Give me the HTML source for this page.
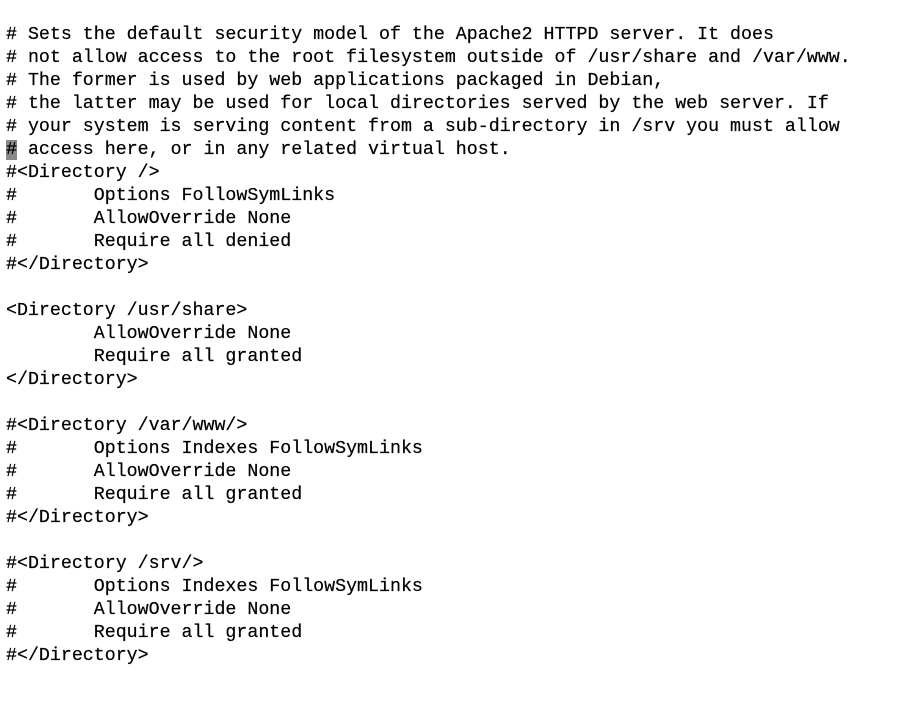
<!DOCTYPE html><html><head><style>
body{margin:0;background:#fff;width:915px;height:723px;overflow:hidden}
pre{margin:0;position:absolute;left:6px;top:24px;font-family:"Liberation Mono",monospace;font-size:18.3px;line-height:23px;color:#000;-webkit-text-stroke:0.2px #000}
.c{background:#8a8a8a}
</style></head><body><pre># Sets the default security model of the Apache2 HTTPD server. It does
# not allow access to the root filesystem outside of /usr/share and /var/www.
# The former is used by web applications packaged in Debian,
# the latter may be used for local directories served by the web server. If
# your system is serving content from a sub-directory in /srv you must allow
<span class="c">#</span> access here, or in any related virtual host.
#&lt;Directory /&gt;
#       Options FollowSymLinks
#       AllowOverride None
#       Require all denied
#&lt;/Directory&gt;

&lt;Directory /usr/share&gt;
        AllowOverride None
        Require all granted
&lt;/Directory&gt;

#&lt;Directory /var/www/&gt;
#       Options Indexes FollowSymLinks
#       AllowOverride None
#       Require all granted
#&lt;/Directory&gt;

#&lt;Directory /srv/&gt;
#       Options Indexes FollowSymLinks
#       AllowOverride None
#       Require all granted
#&lt;/Directory&gt;</pre></body></html>
